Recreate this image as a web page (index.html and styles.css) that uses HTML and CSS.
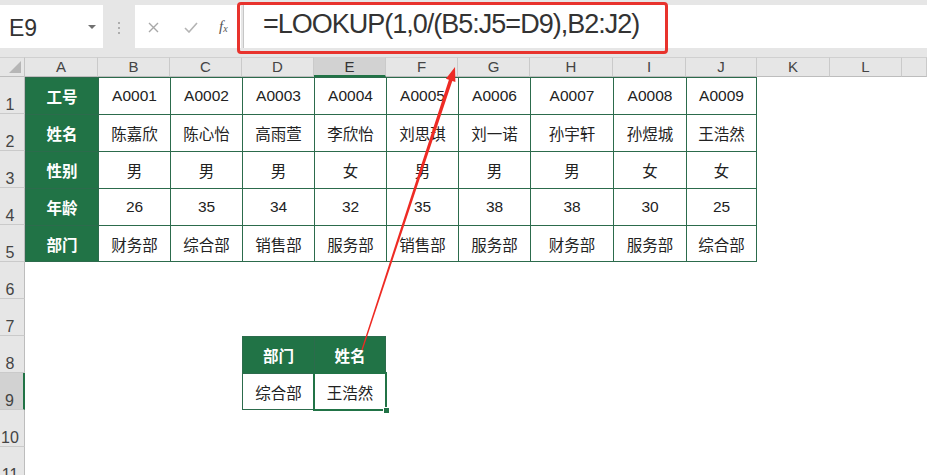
FILE: index.html
```html
<!DOCTYPE html>
<html lang="zh">
<head>
<meta charset="utf-8">
<title>LOOKUP</title>
<link rel="stylesheet" href="styles.css">
</head>
<body>
<div class="app">
  <div class="bar">
    <div class="namebox"><span class="ref">E9</span><span class="caret"></span></div>
    <div class="grip">
      <svg width="4" height="14" viewBox="0 0 4 14"><circle cx="2" cy="2" r="1" fill="#9a9a9a"/><circle cx="2" cy="7" r="1" fill="#9a9a9a"/><circle cx="2" cy="12" r="1" fill="#9a9a9a"/></svg>
    </div>
    <div class="fxbox">
      <svg class="ico-x" width="11" height="11" viewBox="0 0 11 11"><path d="M1 1L10 10M10 1L1 10" stroke="#a8a8a8" stroke-width="1.4" fill="none"/></svg>
      <svg class="ico-ok" width="14" height="11" viewBox="0 0 14 11"><path d="M1 6L5 10L13 1" stroke="#b4b4b4" stroke-width="1.6" fill="none"/></svg>
      <span class="fx">f<sub>x</sub></span>
    </div>
    <div class="input">=LOOKUP(1,0/(B5:J5=D9),B2:J2)</div>
  </div>

  <div class="sheet">
    <div class="corner"><span class="tri"></span></div>
    <div class="ch">A</div><div class="ch">B</div><div class="ch">C</div><div class="ch">D</div>
    <div class="ch on">E</div><div class="ch">F</div><div class="ch">G</div><div class="ch">H</div>
    <div class="ch">I</div><div class="ch">J</div><div class="ch">K</div><div class="ch">L</div><div class="ch"></div>

    <div class="rh">1</div>
    <div class="c t g">工号</div><div class="c t">A0001</div><div class="c t">A0002</div><div class="c t">A0003</div><div class="c t">A0004</div><div class="c t">A0005</div><div class="c t">A0006</div><div class="c t">A0007</div><div class="c t">A0008</div><div class="c t r">A0009</div>

    <div class="rh">2</div>
    <div class="c g">姓名</div><div class="c">陈嘉欣</div><div class="c">陈心怡</div><div class="c">高雨萱</div><div class="c">李欣怡</div><div class="c">刘思琪</div><div class="c">刘一诺</div><div class="c">孙宇轩</div><div class="c">孙煜城</div><div class="c r">王浩然</div>

    <div class="rh">3</div>
    <div class="c g">性别</div><div class="c">男</div><div class="c">男</div><div class="c">男</div><div class="c">女</div><div class="c">男</div><div class="c">男</div><div class="c">男</div><div class="c">女</div><div class="c r">女</div>

    <div class="rh">4</div>
    <div class="c g">年龄</div><div class="c">26</div><div class="c">35</div><div class="c">34</div><div class="c">32</div><div class="c">35</div><div class="c">38</div><div class="c">38</div><div class="c">30</div><div class="c r">25</div>

    <div class="rh">5</div>
    <div class="c b g">部门</div><div class="c b">财务部</div><div class="c b">综合部</div><div class="c b">销售部</div><div class="c b">服务部</div><div class="c b">销售部</div><div class="c b">服务部</div><div class="c b">财务部</div><div class="c b">服务部</div><div class="c b r">综合部</div>

    <div class="rh">6</div>
    <div class="rh">7</div>

    <div class="rh">8</div>
    <div class="c t g colD">部门</div><div class="c t r g">姓名</div>

    <div class="rh on">9</div>
    <div class="c b colD">综合部</div><div class="c b r">王浩然</div>

    <div class="rh">10</div>
    <div class="rh">11</div>

    <div class="sel"><span class="handle"></span></div>
  </div>

  <div class="frame"></div>
  <svg class="arrow" width="927" height="475" viewBox="0 0 927 475">
    <polygon points="362.6,350.2 452.3,80.9 455.4,81.9 455,67 445.9,78.7 448.9,79.7 361.4,349.8" fill="#ee2b24"/>
  </svg>
</div>
</body>
</html>
```

FILE: styles.css
```css
html, body {
  margin: 0;
  padding: 0;
  background: #ffffff;
}

.app {
  position: relative;
  width: 927px;
  height: 475px;
  overflow: hidden;
  font-family: "Liberation Sans", "Noto Sans CJK SC", sans-serif;
  color: #222;
}

/* ---------- formula bar ---------- */
.bar {
  display: flex;
  align-items: flex-start;
  height: 57px;
  box-sizing: border-box;
  padding-top: 5px;
  background: #e6e6e6;
}

.namebox {
  width: 103px;
  height: 43px;
  box-sizing: border-box;
  background: #fff;
  display: flex;
  align-items: center;
  padding-left: 9px;
  padding-top: 3px;
}

.ref {
  font-size: 23px;
  color: #333;
}

.caret {
  margin-left: auto;
  margin-right: 7px;
  margin-top: -3px;
  width: 0;
  height: 0;
  border-left: 4px solid transparent;
  border-right: 4px solid transparent;
  border-top: 4px solid #707070;
}

.grip {
  width: 32px;
  height: 43px;
  display: flex;
  align-items: center;
  justify-content: center;
  padding-top: 2px;
  box-sizing: border-box;
}

.fxbox {
  width: 106px;
  height: 43px;
  background: #fff;
  display: flex;
  align-items: center;
  padding-left: 13px;
  box-sizing: border-box;
}

.ico-x { margin-top: 2px; }

.ico-ok {
  margin-left: 25px;
  margin-top: 2px;
}

.fx {
  margin-left: 21px;
  font-family: "Liberation Serif", serif;
  font-style: italic;
  font-size: 15px;
  color: #555;
  line-height: 1;
}

.fx sub {
  font-size: 10px;
  vertical-align: -1px;
}

.input {
  flex: 1;
  height: 43px;
  margin-left: 2px;
  box-sizing: border-box;
  background: #fff;
  border-left: 1px solid #c6c6c6;
  padding-left: 19px;
  padding-bottom: 4px;
  display: flex;
  align-items: center;
  font-size: 27px;
  letter-spacing: -1px;
  color: #333;
  white-space: nowrap;
}

/* ---------- sheet ---------- */
.sheet {
  position: relative;
  display: grid;
  grid-template-columns: 25px 73px 72px 72px 72px 72px 72px 72px 83px 73px 71px 73px 72px 1fr;
  grid-template-rows: 20px repeat(11, 37px);
  font-size: 15.5px;
}

.corner {
  position: relative;
  background: #e6e6e6;
  border-top: 1px solid #d0d0d0;
  border-right: 1px solid #c4c4c4;
  border-bottom: 1px solid #bdbdbd;
  box-sizing: border-box;
}

.tri {
  position: absolute;
  right: 3px;
  bottom: 3px;
  width: 0;
  height: 0;
  border-left: 12px solid transparent;
  border-bottom: 12px solid #b6b6b6;
}

.ch {
  background: #e6e6e6;
  border-top: 1px solid #d0d0d0;
  border-right: 1px solid #cacaca;
  border-bottom: 1px solid #bdbdbd;
  box-sizing: border-box;
  display: flex;
  align-items: flex-end;
  justify-content: center;
  padding-bottom: 1px;
  font-size: 15px;
  color: #444;
  line-height: 16px;
}

.ch.on {
  background: #d2d2d2;
  border-bottom: 2px solid #217346;
  padding-bottom: 0;
  color: #333;
}

.rh {
  grid-column: 1;
  background: #e6e6e6;
  border-right: 1px solid #bdbdbd;
  border-bottom: 1px solid #cacaca;
  box-sizing: border-box;
  display: flex;
  align-items: flex-end;
  justify-content: center;
  padding-right: 4px;
  padding-bottom: 1px;
  font-size: 16px;
  line-height: 15px;
  color: #444;
}

.rh.on {
  background: #d2d2d2;
  border-right: 2px solid #217346;
}

.c {
  box-sizing: border-box;
  border-left: 1px solid #2c6b4c;
  border-top: 1px solid #2c6b4c;
  display: flex;
  align-items: center;
  justify-content: center;
  white-space: nowrap;
  background: #fff;
  color: #222;
}

.c.r { border-right: 1px solid #2c6b4c; }
.c.b { border-bottom: 1px solid #2c6b4c; }

.c.g {
  background: #217346;
  color: #fff;
  font-weight: bold;
}

.colD { grid-column: 5; }

.sel {
  position: absolute;
  left: 313px;
  top: 315px;
  width: 74px;
  height: 39px;
  box-sizing: border-box;
  border: 2px solid #217346;
  pointer-events: none;
}

.handle {
  position: absolute;
  right: -5px;
  bottom: -5px;
  width: 5px;
  height: 5px;
  background: #217346;
  border: 1px solid #fff;
}

/* ---------- annotations ---------- */
.frame {
  position: absolute;
  left: 237px;
  top: 2px;
  width: 431px;
  height: 52px;
  box-sizing: border-box;
  border: 3px solid #e8332d;
  border-radius: 4px;
  pointer-events: none;
}

.arrow {
  position: absolute;
  left: 0;
  top: 0;
  pointer-events: none;
}
```
